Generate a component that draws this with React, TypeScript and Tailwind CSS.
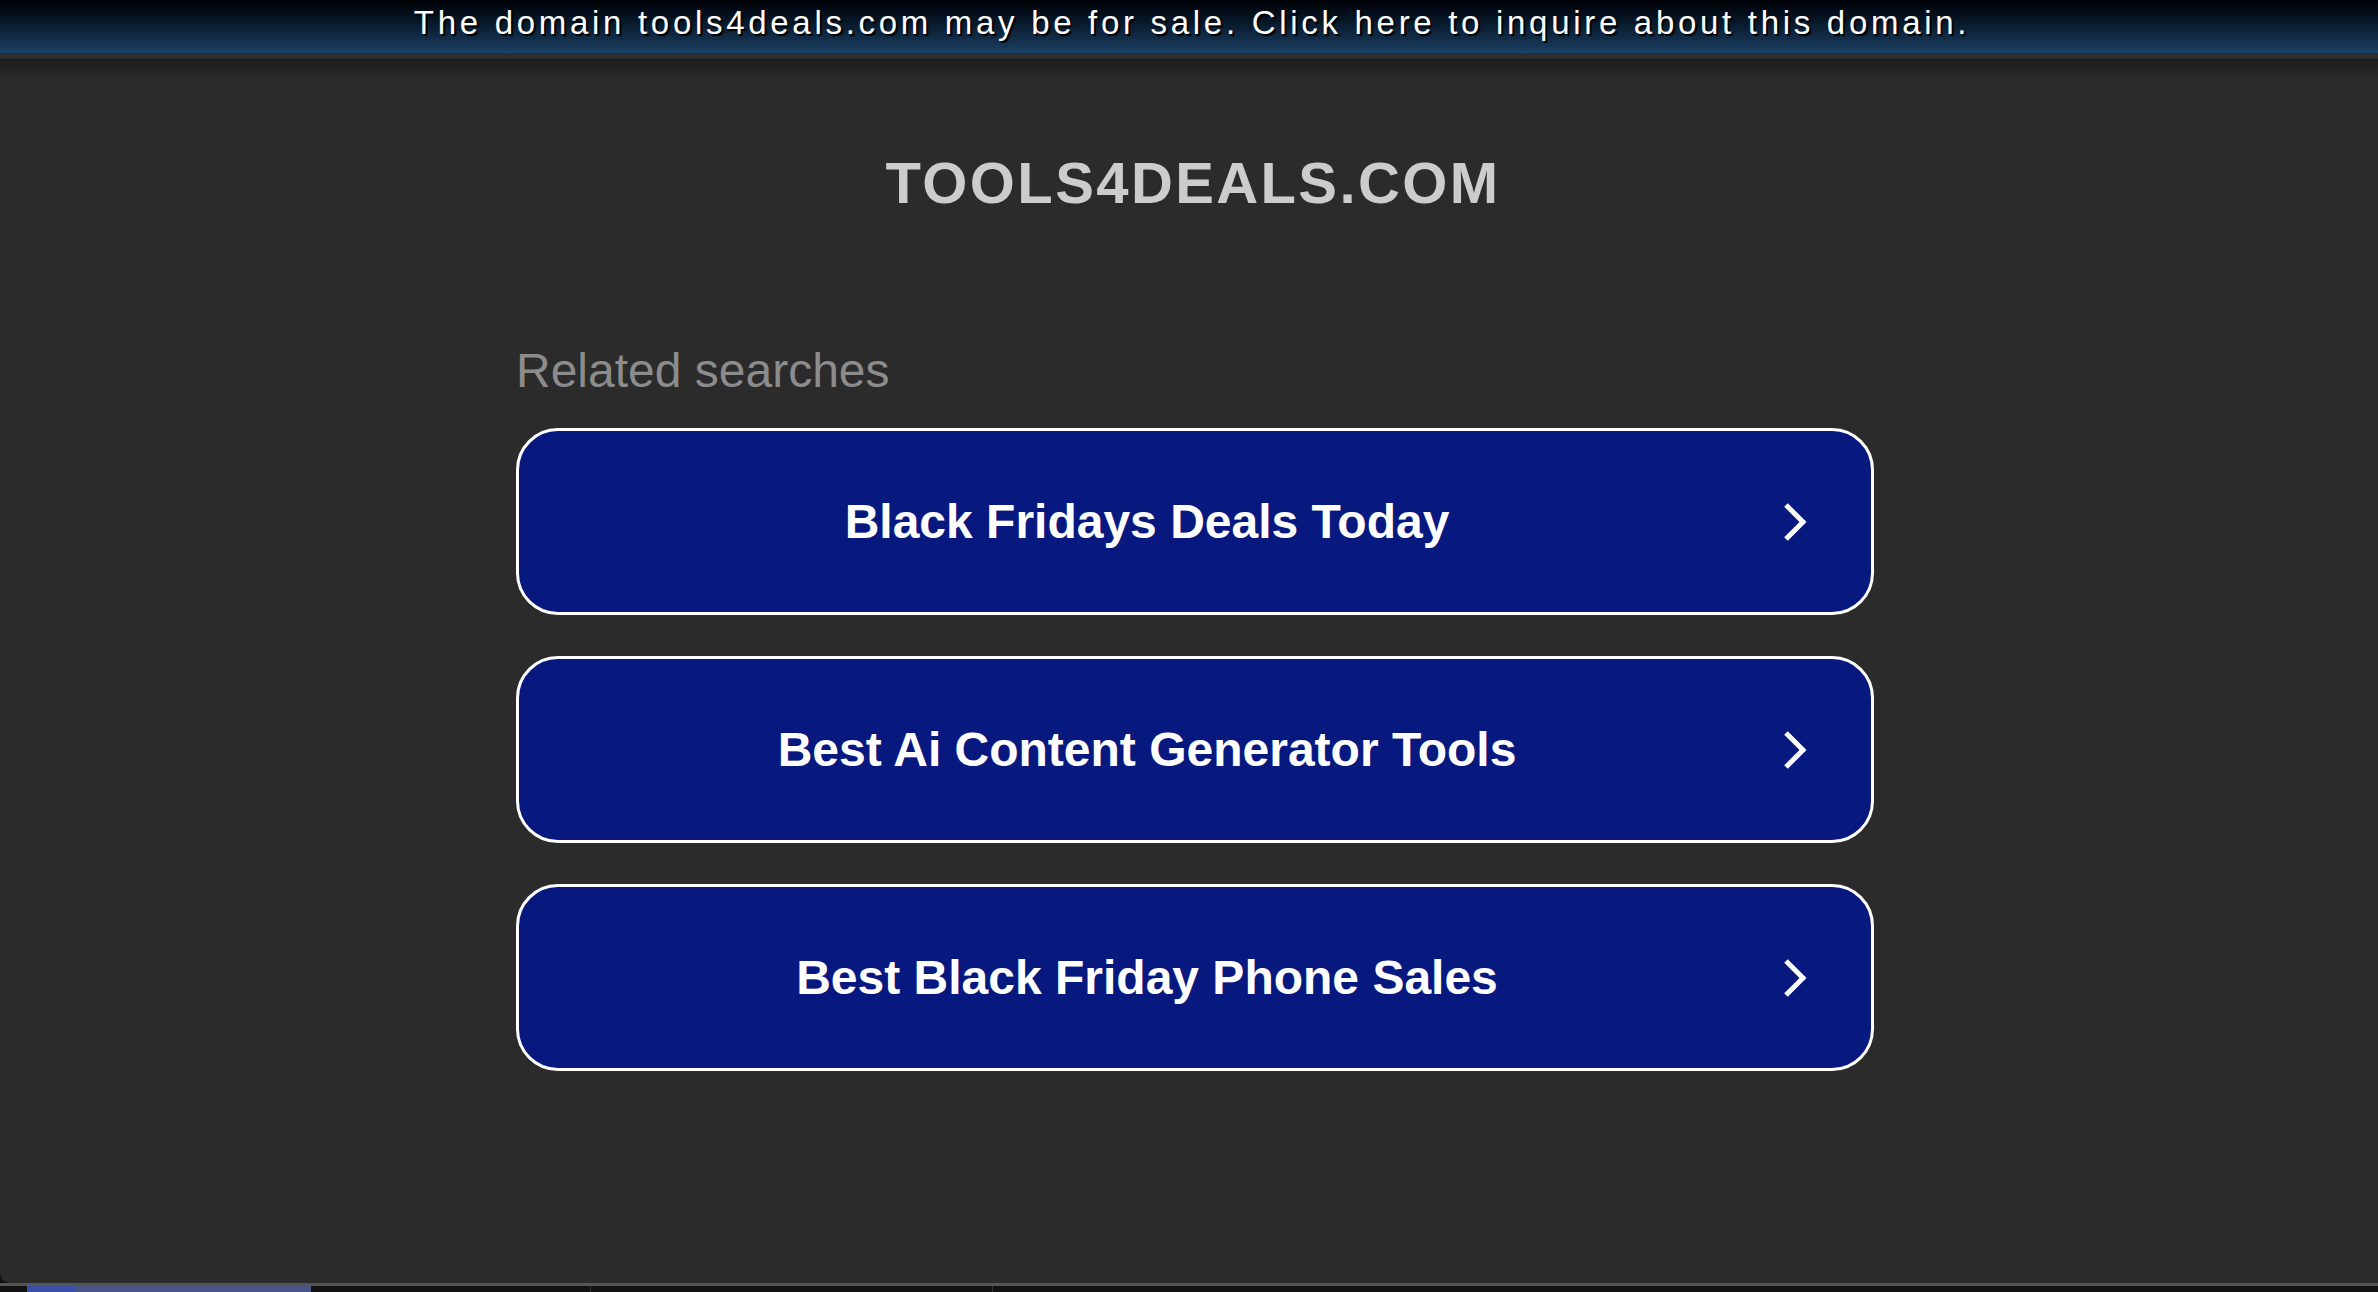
const searches = [
  "Black Fridays Deals Today",
  "Best Ai Content Generator Tools",
  "Best Black Friday Phone Sales",
];

const Chevron = () => (
  <svg width="24" height="40" viewBox="0 0 24 40" fill="none">
    <polyline
      points="3,3 20,20 3,37"
      stroke="white"
      strokeWidth="5"
      strokeLinecap="butt"
      strokeLinejoin="miter"
    />
  </svg>
);

const App = () => {
  return (
    <div className="flex flex-col w-full h-[1292px] overflow-hidden bg-[#111111] font-['Liberation_Sans',Arial,sans-serif]">
      <div className="flex flex-col flex-1 rounded-bl-[10px] bg-[#2b2b2b] overflow-hidden">
        {/* sale banner */}
        <div className="flex justify-center h-[53px] pt-[6px] pl-[6px] bg-gradient-to-b from-[#010307] to-[#1c4064]">
          <p className="text-[33px] leading-none tracking-[3.7px] whitespace-nowrap text-white [text-shadow:2px_2px_1px_#000]">
            The domain tools4deals.com may be for sale. Click here to inquire
            about this domain.
          </p>
        </div>
        <div className="h-[6px] bg-[#2c2c2c]" />
        <div className="h-[20px] bg-gradient-to-b from-[#1c1c1c] to-[#2b2b2b]" />

        <div className="flex flex-col items-center pl-[8px] mt-[75px]">
          <h1 className="text-[58px] leading-none font-bold tracking-[2.4px] text-[#cccccc]">
            TOOLS4DEALS.COM
          </h1>
        </div>

        <div className="flex flex-col items-center pl-[12px] mt-[135px]">
          <div className="w-[1358px]">
            <p className="text-[48px] leading-none text-[#8c8c8c]">
              Related searches
            </p>
            <div className="flex flex-col gap-[41px] mt-[33px]">
              {searches.map((label) => (
                <a
                  key={label}
                  href="#"
                  className="flex items-center h-[187px] rounded-[42px] border-[3px] border-white bg-[#07187f]"
                >
                  <span className="flex-1 text-center text-[48px] leading-none font-bold text-white">
                    {label}
                  </span>
                  <span className="ml-[8px] mr-[64px] flex">
                    <Chevron />
                  </span>
                </a>
              ))}
            </div>
          </div>
        </div>
      </div>

      {/* desktop edge below the window */}
      <div className="h-[3px] bg-[#555555]" />
      <div className="flex h-[6px] bg-[#111111]">
        <div className="w-[27px]" />
        <div className="w-[49px] bg-[#3b4fa8]" />
        <div className="w-[235px] bg-[#4a5487]" />
        <div className="w-[280px] border-r border-[#333333]" />
        <div className="w-[402px] border-r border-[#333333]" />
      </div>
    </div>
  );
};

export default App;
